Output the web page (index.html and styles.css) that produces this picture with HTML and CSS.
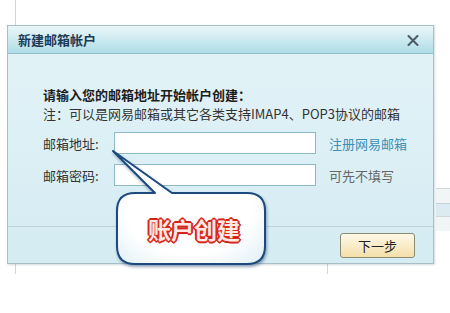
FILE: index.html
```html
<!DOCTYPE html>
<html>
<head>
  <meta charset="UTF-8">
  <title>新建邮箱帐户</title>
  <link rel="stylesheet" href="styles.css">
</head>
<body>
  <div class="backdrop">
    <div class="back-window"></div>
    <div class="back-edge"></div>
    <div class="back-side">
      <div class="side-bar"></div>
      <div class="side-band"></div>
      <div class="side-bar"></div>
    </div>
  </div>

  <div class="dialog">
    <div class="dialog-head">
      <span class="dialog-title">新建邮箱帐户</span>
      <svg class="close" width="12" height="11" viewBox="0 0 12 11">
        <path d="M1.5 1 L10.5 10 M10.5 1 L1.5 10" stroke="#4d5b63" stroke-width="2" stroke-linecap="round"/>
      </svg>
    </div>
    <div class="dialog-body">
      <div class="intro">请输入您的邮箱地址开始帐户创建：</div>
      <div class="note">注：可以是网易邮箱或其它各类支持IMAP4、POP3协议的邮箱</div>
      <div class="row">
        <label class="label">邮箱地址:</label>
        <input class="field" type="text">
        <a class="link">注册网易邮箱</a>
      </div>
      <div class="row">
        <label class="label">邮箱密码:</label>
        <input class="field" type="password">
        <span class="hint">可先不填写</span>
      </div>
    </div>
    <div class="dialog-foot">
      <button class="next">下一步</button>
    </div>
  </div>

  <div class="callout">
    <svg width="180" height="135" viewBox="0 0 180 135">
      <defs>
        <radialGradient id="bub" cx="50%" cy="50%" r="70%">
          <stop offset="0.6" stop-color="#ffffff"/>
          <stop offset="1" stop-color="#dfeef6"/>
        </radialGradient>
      </defs>
      <path class="bubble" d="M35 53 L55 53 L13 11 L72 53 L147 53 Q165 53 165 71 L165 106 Q165 124 147 124 L35 124 Q17 124 17 106 L17 71 Q17 53 35 53 Z"
            fill="url(#bub)" stroke="#1d4a7c" stroke-width="2" stroke-linejoin="round"/>
    </svg>
    <div class="callout-text">账户创建</div>
  </div>
</body>
</html>
```

FILE: styles.css
```css
body {
  margin: 0;
  width: 450px;
  height: 313px;
  overflow: hidden;
  background: #fff;
  position: relative;
  font-family: "Noto Sans CJK SC", "Noto Sans", sans-serif;
  font-size: 13px;
  color: #333;
}
.backdrop {
  position: absolute;
  left: 0;
  top: 0;
  width: 450px;
  height: 313px;
}
.back-window {
  position: absolute;
  left: 15px;
  top: -2px;
  width: 311px;
  height: 276px;
  border-left: 1px solid #c9d9de;
}
.back-edge {
  position: absolute;
  left: 327px;
  top: 250px;
  height: 24px;
  border-left: 1px solid #c9d9de;
}
.back-side {
  position: absolute;
  left: 436px;
  top: 188px;
  width: 14px;
}
.side-bar {
  height: 14px;
  border-top: 1px solid #cfd8dc;
  background: #f2f5f6;
}
.side-band {
  height: 12px;
  background: #dcebf2;
  border-top: 1px solid #c2d2d8;
}
.dialog {
  position: absolute;
  left: 7px;
  top: 25px;
  width: 425px;
  border: 1px solid #a9bec6;
  box-shadow: 1px 1px 2px rgba(80, 110, 120, 0.25);
  background: linear-gradient(#e3f3f7, #d5ecf3);
}
.dialog-head {
  height: 27px;
  display: flex;
  align-items: center;
  justify-content: space-between;
  padding: 0 14px 0 10px;
  background: linear-gradient(#e9f6f9, #b0dde7);
  border-bottom: 1px solid #93bfcb;
}
.dialog-title {
  font-weight: bold;
  font-size: 13px;
  color: #1c3b57;
}
.close {
  margin-top: 2px;
}
.dialog-body {
  box-sizing: border-box;
  height: 173px;
  padding: 31px 0 0 35px;
  border-bottom: 1px solid #bcd4dc;
}
.intro {
  font-weight: bold;
  line-height: 19px;
  color: #1d1d1d;
}
.note {
  line-height: 19px;
  color: #333;
}
.row {
  display: flex;
  align-items: center;
  margin-top: 9px;
}
.row + .row {
  margin-top: 10px;
}
.label {
  width: 71px;
  color: #333;
}
.field {
  box-sizing: border-box;
  width: 202px;
  height: 22px;
  margin: 0;
  border: 1px solid #8fb9c8;
  background: #fff;
}
.link {
  margin-left: 13px;
  color: #3b90b6;
}
.hint {
  margin-left: 13px;
  color: #666;
}
.dialog-foot {
  height: 36px;
  display: flex;
  justify-content: flex-end;
  align-items: flex-start;
  padding: 6px 18px 0 0;
  box-sizing: border-box;
}
.next {
  width: 75px;
  height: 25px;
  border: 1px solid #8b8b72;
  border-radius: 3px;
  background: linear-gradient(#fdf9ea, #f4dfa9);
  font-family: "Noto Sans CJK SC", sans-serif;
  font-size: 13px;
  color: #222;
  padding: 0;
}
.callout {
  position: absolute;
  left: 100px;
  top: 140px;
  width: 180px;
  height: 135px;
}
.callout svg {
  display: block;
  filter: drop-shadow(1px 2px 1.5px rgba(20, 60, 110, 0.45));
}
.callout-text {
  position: absolute;
  left: 17px;
  top: 53px;
  width: 148px;
  height: 71px;
  display: flex;
  align-items: center;
  justify-content: center;
  padding-left: 6px;
  box-sizing: border-box;
  font-size: 23px;
  font-weight: bold;
  color: #ffe9e4;
  text-shadow:
    1px 0 0 #d9291d, -1px 0 0 #d9291d, 0 1px 0 #d9291d, 0 -1px 0 #d9291d,
    1px 1px 0 #d9291d, -1px -1px 0 #d9291d, 1px -1px 0 #d9291d, -1px 1px 0 #d9291d,
    2px 0 0 #c42218, -2px 0 0 #c42218, 0 2px 0 #c42218, 0 -2px 0 #c42218;
}
```
